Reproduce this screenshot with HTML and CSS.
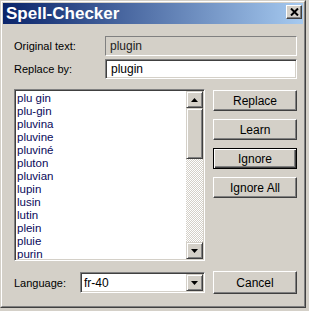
FILE: index.html
```html
<!DOCTYPE html>
<html lang="en">
  <head>
    <meta charset="UTF-8" />
    <title>Spell-Checker</title>
    <link rel="stylesheet" href="styles.css">
  </head>

  <body>
    <div class="window">
      <div class="frame">
        <div class="titlebar">
          <span class="title">Spell-Checker</span>
          <button class="close">
            <svg width="9" height="8" viewBox="0 0 9 8">
              <path d="M1 0.5 L8 7.5 M8 0.5 L1 7.5" stroke="#000" stroke-width="2" />
            </svg>
          </button>
        </div>

        <div class="content">
          <div class="row">
            <label>Original text:</label>
            <div class="static">plugin</div>
          </div>
          <div class="row">
            <label>Replace by:</label>
            <div class="field">plugin</div>
          </div>

          <div class="main">
            <div class="listbox">
              <ul class="items">
                <li>plu gin</li>
                <li>plu-gin</li>
                <li>pluvina</li>
                <li>pluvine</li>
                <li>pluviné</li>
                <li>pluton</li>
                <li>pluvian</li>
                <li>lupin</li>
                <li>lusin</li>
                <li>lutin</li>
                <li>plein</li>
                <li>pluie</li>
                <li>purin</li>
              </ul>
              <div class="scrollbar">
                <div class="arrow">
                  <svg width="7" height="4" viewBox="0 0 7 4"><polygon points="3.5,0 7,4 0,4" fill="#000" /></svg>
                </div>
                <div class="thumb"></div>
                <div class="track"></div>
                <div class="arrow">
                  <svg width="7" height="4" viewBox="0 0 7 4"><polygon points="0,0 7,0 3.5,4" fill="#000" /></svg>
                </div>
              </div>
            </div>

            <div class="buttons">
              <button class="btn">Replace</button>
              <button class="btn">Learn</button>
              <button class="btn focused">Ignore</button>
              <button class="btn">Ignore All</button>
            </div>
          </div>

          <div class="bottom">
            <div class="lang">
              <label>Language:</label>
              <div class="combo">
                <span>fr-40</span>
                <div class="arrow">
                  <svg width="7" height="4" viewBox="0 0 7 4"><polygon points="0,0 7,0 3.5,4" fill="#000" /></svg>
                </div>
              </div>
            </div>
            <button class="btn cancel">Cancel</button>
          </div>
        </div>
      </div>
    </div>
  </body>
</html>
```

FILE: styles.css
```css
* {
  margin: 0;
  padding: 0;
  box-sizing: border-box;
  font-family: 'Liberation Sans', Arial, sans-serif;
  font-size: 11px;
}

body {
  background: #d4d0c8;
  color: #000;
}

.window {
  width: 306px;
  height: 308px;
  border: 1px solid;
  border-color: #d4d0c8 #404040 #404040 #d4d0c8;
}

.frame {
  height: 100%;
  border: 1px solid;
  border-color: #fff #808080 #808080 #fff;
  padding: 1px;
}

.titlebar {
  height: 21px;
  display: flex;
  justify-content: space-between;
  background: linear-gradient(to right, #0a246a, #a6caf0);
}

.title {
  color: #fff;
  font-size: 17px;
  font-weight: bold;
  line-height: 21px;
  padding-left: 3px;
}

.close {
  width: 16px;
  height: 14px;
  margin: 2px 1px 0 0;
  display: flex;
  align-items: center;
  justify-content: center;
  background: #d4d0c8;
  border: 1px solid;
  border-color: #fff #404040 #404040 #fff;
  box-shadow: inset -1px -1px #808080;
}

.close svg {
  display: block;
}

.content {
  padding: 12px 6px 0 11px;
}

.row {
  display: flex;
  align-items: center;
  height: 20px;
  margin-bottom: 3px;
}

.row label {
  width: 91px;
}

.static,
.field {
  width: 192px;
  height: 20px;
  line-height: 18px;
  font-size: 12px;
}

.static {
  border: 1px solid;
  border-color: #808080 #fff #fff #808080;
  color: #222;
  padding-left: 4px;
}

.field {
  background: #fff;
  border: 1px solid;
  border-color: #808080 #fff #fff #808080;
  box-shadow: inset 1px 1px #404040, inset -1px -1px #d4d0c8;
  padding-left: 5px;
}

.main {
  display: grid;
  grid-template-columns: 191px 84px;
  column-gap: 8px;
  margin-top: 10px;
}

.listbox {
  height: 172px;
  display: flex;
  background: #fff;
  border: 1px solid;
  border-color: #808080 #fff #fff #808080;
  box-shadow: inset 1px 1px #404040, inset -1px -1px #d4d0c8;
  padding: 1px;
  overflow: hidden;
}

.items {
  flex: 1;
  list-style: none;
  padding: 1px 0 0 1px;
  overflow: hidden;
}

.items li {
  font-size: 11.5px;
  line-height: 13px;
  color: #0a0a5a;
}

.scrollbar {
  width: 17px;
  display: flex;
  flex-direction: column;
}

.arrow {
  width: 17px;
  height: 17px;
  flex: none;
  display: flex;
  align-items: center;
  justify-content: center;
  background: #d4d0c8;
  border: 1px solid;
  border-color: #d4d0c8 #404040 #404040 #d4d0c8;
  box-shadow: inset 1px 1px #fff, inset -1px -1px #808080;
}

.arrow svg {
  display: block;
}

.thumb {
  height: 51px;
  flex: none;
  background: #d4d0c8;
  border: 1px solid;
  border-color: #d4d0c8 #404040 #404040 #d4d0c8;
  box-shadow: inset 1px 1px #fff, inset -1px -1px #808080;
}

.track {
  flex: 1;
  background: repeating-conic-gradient(#fff 0 25%, #d4d0c8 0 50%);
  background-size: 2px 2px;
}

.buttons {
  display: flex;
  flex-direction: column;
  gap: 8px;
  padding-top: 1px;
}

.btn {
  width: 84px;
  height: 21px;
  background: #d4d0c8;
  border: 1px solid;
  border-color: #fff #404040 #404040 #fff;
  box-shadow: inset -1px -1px #808080;
  color: #000;
  font-size: 12px;
}

.btn.focused {
  border: 1px solid #000;
  box-shadow: inset 1px 1px #fff, inset -1px -1px #404040, inset -2px -2px #808080;
}

.bottom {
  display: grid;
  grid-template-columns: 191px 84px;
  column-gap: 8px;
  align-items: center;
  margin-top: 10px;
}

.lang {
  display: flex;
  align-items: center;
}

.lang label {
  width: 66px;
}

.combo {
  width: 125px;
  height: 21px;
  display: flex;
  align-items: center;
  justify-content: space-between;
  background: #fff;
  border: 1px solid;
  border-color: #808080 #fff #fff #808080;
  box-shadow: inset 1px 1px #404040, inset -1px -1px #d4d0c8;
  padding: 1px 1px 1px 3px;
}

.combo span {
  font-size: 12px;
}

.cancel {
  height: 23px;
}
```
